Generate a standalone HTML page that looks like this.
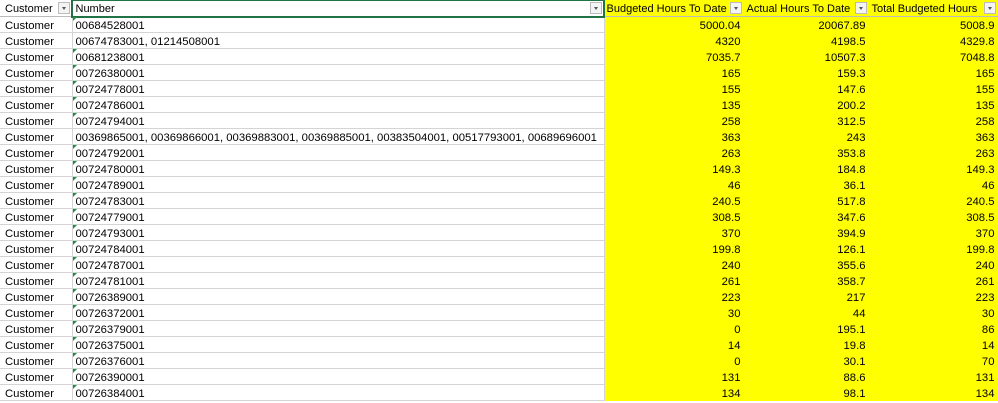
<!DOCTYPE html>
<html><head><style>
body{margin:0;width:998px;height:403px;overflow:hidden;background:#fff;font-family:"Liberation Sans",Arial,sans-serif;font-size:11px;color:#000}
table{border-collapse:collapse;table-layout:fixed;position:absolute;left:0;top:0;width:998px;font-size:11.3px}
td{height:12px;max-height:12px;padding:3px 3px 0 3px;border-right:1px solid #d4d4d4;border-bottom:1px solid #d4d4d4;white-space:nowrap;overflow:hidden;position:relative;line-height:12px;box-sizing:content-box}
td:first-child{padding-left:5px}
tr.h td{height:14px;max-height:14px;padding-top:2px;line-height:14px;border-bottom:1px solid #bbb;font-size:11px}
td.y{background:#ffff00;border-color:#ffff00;text-align:right}
tr.h td.y{text-align:left;padding-left:2px}
.f{position:absolute;right:2px;top:2px;width:12px;height:12px;border:1px solid #bbb;background:#f4f4f4;box-sizing:border-box}
.f:after{content:"";position:absolute;left:3px;top:4px;border:2px solid transparent;border-top:3px solid #555}
.t{position:absolute;left:0;top:0;border-top:4px solid #1e8e3e;border-right:4px solid transparent}
.sel{outline:2px solid #217346;outline-offset:-1px}
</style></head><body>
<table>
<colgroup><col style="width:72px"><col style="width:532px"><col style="width:140px"><col style="width:125px"><col style="width:129px"></colgroup>
<tr class="h"><td>Customer<span class="f"></span></td><td class="sel">Number<span class="f"></span></td><td class="y">Budgeted Hours To Date<span class="f"></span></td><td class="y">Actual Hours To Date<span class="f"></span></td><td class="y">Total Budgeted Hours<span class="f"></span></td></tr>
<tr><td>Customer</td><td><span class="t"></span>00684528001</td><td class="y">5000.04</td><td class="y">20067.89</td><td class="y">5008.9</td></tr>
<tr><td>Customer</td><td>00674783001, 01214508001</td><td class="y">4320</td><td class="y">4198.5</td><td class="y">4329.8</td></tr>
<tr><td>Customer</td><td><span class="t"></span>00681238001</td><td class="y">7035.7</td><td class="y">10507.3</td><td class="y">7048.8</td></tr>
<tr><td>Customer</td><td><span class="t"></span>00726380001</td><td class="y">165</td><td class="y">159.3</td><td class="y">165</td></tr>
<tr><td>Customer</td><td><span class="t"></span>00724778001</td><td class="y">155</td><td class="y">147.6</td><td class="y">155</td></tr>
<tr><td>Customer</td><td><span class="t"></span>00724786001</td><td class="y">135</td><td class="y">200.2</td><td class="y">135</td></tr>
<tr><td>Customer</td><td><span class="t"></span>00724794001</td><td class="y">258</td><td class="y">312.5</td><td class="y">258</td></tr>
<tr><td>Customer</td><td>00369865001, 00369866001, 00369883001, 00369885001, 00383504001, 00517793001, 00689696001</td><td class="y">363</td><td class="y">243</td><td class="y">363</td></tr>
<tr><td>Customer</td><td><span class="t"></span>00724792001</td><td class="y">263</td><td class="y">353.8</td><td class="y">263</td></tr>
<tr><td>Customer</td><td><span class="t"></span>00724780001</td><td class="y">149.3</td><td class="y">184.8</td><td class="y">149.3</td></tr>
<tr><td>Customer</td><td><span class="t"></span>00724789001</td><td class="y">46</td><td class="y">36.1</td><td class="y">46</td></tr>
<tr><td>Customer</td><td><span class="t"></span>00724783001</td><td class="y">240.5</td><td class="y">517.8</td><td class="y">240.5</td></tr>
<tr><td>Customer</td><td><span class="t"></span>00724779001</td><td class="y">308.5</td><td class="y">347.6</td><td class="y">308.5</td></tr>
<tr><td>Customer</td><td><span class="t"></span>00724793001</td><td class="y">370</td><td class="y">394.9</td><td class="y">370</td></tr>
<tr><td>Customer</td><td><span class="t"></span>00724784001</td><td class="y">199.8</td><td class="y">126.1</td><td class="y">199.8</td></tr>
<tr><td>Customer</td><td><span class="t"></span>00724787001</td><td class="y">240</td><td class="y">355.6</td><td class="y">240</td></tr>
<tr><td>Customer</td><td><span class="t"></span>00724781001</td><td class="y">261</td><td class="y">358.7</td><td class="y">261</td></tr>
<tr><td>Customer</td><td><span class="t"></span>00726389001</td><td class="y">223</td><td class="y">217</td><td class="y">223</td></tr>
<tr><td>Customer</td><td><span class="t"></span>00726372001</td><td class="y">30</td><td class="y">44</td><td class="y">30</td></tr>
<tr><td>Customer</td><td><span class="t"></span>00726379001</td><td class="y">0</td><td class="y">195.1</td><td class="y">86</td></tr>
<tr><td>Customer</td><td><span class="t"></span>00726375001</td><td class="y">14</td><td class="y">19.8</td><td class="y">14</td></tr>
<tr><td>Customer</td><td><span class="t"></span>00726376001</td><td class="y">0</td><td class="y">30.1</td><td class="y">70</td></tr>
<tr><td>Customer</td><td><span class="t"></span>00726390001</td><td class="y">131</td><td class="y">88.6</td><td class="y">131</td></tr>
<tr><td>Customer</td><td><span class="t"></span>00726384001</td><td class="y">134</td><td class="y">98.1</td><td class="y">134</td></tr>
</table>
</body></html>
